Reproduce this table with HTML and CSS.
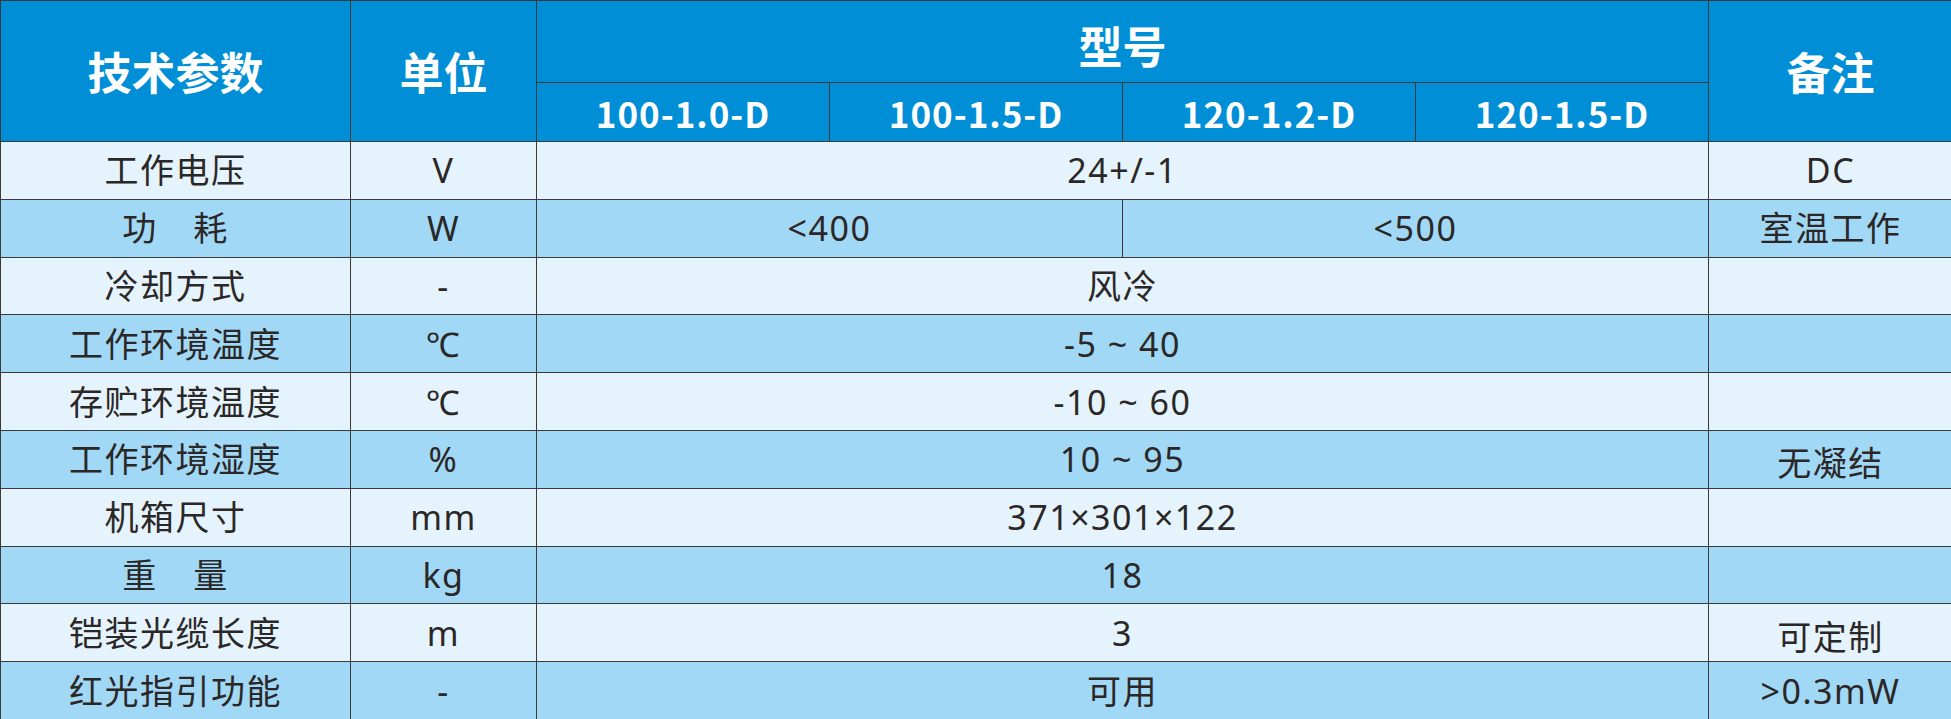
FILE: index.html
```html
<!DOCTYPE html>
<html lang="zh-CN">
<head>
<meta charset="utf-8">
<title>技术参数</title>
<link rel="stylesheet" href="styles.css">
</head>
<body>
<table class="spec">
  <colgroup>
    <col class="c-param">
    <col class="c-unit">
    <col class="c-model">
    <col class="c-model">
    <col class="c-model">
    <col class="c-model">
    <col class="c-note">
  </colgroup>
  <thead>
    <tr class="h1">
      <th rowspan="2" class="title">技术参数</th>
      <th rowspan="2" class="title">单位</th>
      <th colspan="4" class="title model">型号</th>
      <th rowspan="2" class="title">备注</th>
    </tr>
    <tr class="h2">
      <th class="sub">100-1.0-D</th>
      <th class="sub">100-1.5-D</th>
      <th class="sub">120-1.2-D</th>
      <th class="sub">120-1.5-D</th>
    </tr>
  </thead>
  <tbody>
    <tr class="light">
      <td>工作电压</td><td>V</td><td colspan="4">24+/-1</td><td class="note">DC</td>
    </tr>
    <tr class="blue">
      <td>功　耗</td><td>W</td><td colspan="2">&lt;400</td><td colspan="2">&lt;500</td><td class="note">室温工作</td>
    </tr>
    <tr class="light">
      <td>冷却方式</td><td>-</td><td colspan="4">风冷</td><td class="note"></td>
    </tr>
    <tr class="blue">
      <td>工作环境温度</td><td>℃</td><td colspan="4">-5 ~ 40</td><td class="note"></td>
    </tr>
    <tr class="light">
      <td>存贮环境温度</td><td>℃</td><td colspan="4">-10 ~ 60</td><td class="note"></td>
    </tr>
    <tr class="blue">
      <td>工作环境湿度</td><td>%</td><td colspan="4">10 ~ 95</td><td class="note low">无凝结</td>
    </tr>
    <tr class="light">
      <td>机箱尺寸</td><td>mm</td><td colspan="4">371×301×122</td><td class="note"></td>
    </tr>
    <tr class="blue">
      <td>重　量</td><td>kg</td><td colspan="4">18</td><td class="note"></td>
    </tr>
    <tr class="light">
      <td>铠装光缆长度</td><td>m</td><td colspan="4">3</td><td class="note low">可定制</td>
    </tr>
    <tr class="blue">
      <td>红光指引功能</td><td>-</td><td colspan="4">可用</td><td class="note">&gt;0.3mW</td>
    </tr>
  </tbody>
</table>
</body>
</html>
```

FILE: styles.css
```css
html, body {
  margin: 0;
  padding: 0;
  background: #ffffff;
}

.spec {
  width: 1951px;
  table-layout: fixed;
  border-collapse: collapse;
  font-family: "Noto Sans", "Noto Sans CJK SC", sans-serif;
  color: #2b2727;
}

.c-param { width: 350px; }
.c-unit { width: 186px; }
.c-model { width: 293px; }
.c-note { width: 244px; }

.spec th,
.spec td {
  border: 1px solid #3a3a3a;
  padding: 0;
  text-align: center;
  vertical-align: middle;
  overflow: hidden;
  white-space: nowrap;
}

.spec th {
  background: #008ed6;
  color: #ffffff;
  font-family: "Noto Sans CJK SC", sans-serif;
  font-weight: 700;
}

.h1 { height: 82px; }
.h2 { height: 59px; }

.title {
  font-size: 44px;
  line-height: 1;
  padding-top: 8px;
}

.title.model {
  padding-top: 6px;
}

.sub {
  font-size: 35px;
  letter-spacing: 1px;
  line-height: 1;
  padding-top: 2px;
}

.spec tbody tr {
  height: 57.8px;
}

.spec td {
  font-size: 34px;
  letter-spacing: 1.5px;
  line-height: 1;
}

.light td { background: #e5f3fc; }
.blue td { background: #a1d8f5; }

.note.low {
  padding-top: 8px;
}
```
